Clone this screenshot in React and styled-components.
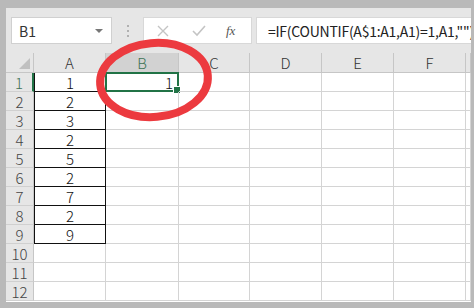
import React from 'react';
import styled, { createGlobalStyle } from 'styled-components';

const GlobalStyle = createGlobalStyle`
  html, body {
    margin: 0;
    padding: 0;
    background: #b9b9b9;
    width: 474px;
    height: 308px;
    overflow: hidden;
  }
  * { box-sizing: border-box; }
`;

const green = '#217346';
const gridLine = '#d4d4d4';

const columns = ['A', 'B', 'C', 'D', 'E', 'F', ''];
const colValues = [1, 2, 3, 2, 5, 2, 7, 2, 9];

const Window = styled.div`
  margin: 8px 3px 0 6px;
  height: 294px;
  background: #e6e6e6;
  display: flex;
  flex-direction: column;
  font-family: 'Noto Sans CJK SC', 'Noto Sans', sans-serif;
  position: relative;
  overflow: hidden;
`;

const Toolbar = styled.div`
  height: 45px;
  display: flex;
  align-items: flex-start;
  padding: 9px 0 0 5px;
`;

const NameBox = styled.div`
  width: 101px;
  height: 27px;
  background: #fff;
  border: 1px solid #d0d0d0;
  display: flex;
  align-items: center;
  justify-content: space-between;
  padding: 0 8px 0 7px;
  font-size: 14px;
  color: #333;
`;

const Caret = styled.span`
  width: 0;
  height: 0;
  border-left: 4px solid transparent;
  border-right: 4px solid transparent;
  border-top: 4px solid #777;
`;

const Grip = styled.div`
  width: 31px;
  height: 27px;
  display: flex;
  flex-direction: column;
  align-items: center;
  justify-content: center;
  gap: 3px;
  span {
    width: 2px;
    height: 2px;
    background: #b0b0b0;
  }
`;

const FxBox = styled.div`
  width: 109px;
  height: 27px;
  background: #fff;
  border: 1px solid #d8d8d8;
  display: flex;
  align-items: center;
  padding-left: 12px;
  gap: 21px;
`;

const Fx = styled.span`
  font-family: 'Liberation Serif', serif;
  font-style: italic;
  font-size: 13px;
  color: #555;
  margin-left: -2px;
`;

const FormulaInput = styled.div`
  margin-left: 4px;
  flex: 1;
  min-width: 0;
  height: 27px;
  background: #fff;
  border: 1px solid #d8d8d8;
  border-right: none;
  display: flex;
  align-items: center;
  padding-left: 11px;
  font-size: 14px;
  letter-spacing: -0.25px;
  color: #222;
  white-space: nowrap;
  overflow: hidden;
`;

const Sheet = styled.div`
  flex: 1;
  display: grid;
  grid-template-columns: 28px 72px 73px 71px 72px 72px 72px 1fr;
  grid-template-rows: 20px repeat(12, 19px);
  background: #fff;
  position: relative;
`;

const Corner = styled.div`
  background: #e6e6e6;
  border-right: 1px solid #c6c6c6;
  border-bottom: 1px solid #c6c6c6;
  position: relative;
  &::after {
    content: '';
    position: absolute;
    right: 3px;
    bottom: 3px;
    width: 0;
    height: 0;
    border-left: 11px solid transparent;
    border-bottom: 11px solid #c0c0c0;
  }
`;

const ColHead = styled.div`
  background: ${(p) => (p.$active ? '#d2d2d2' : '#e6e6e6')};
  color: ${(p) => (p.$active ? '#3d7255' : '#333')};
  border-right: 1px solid #c6c6c6;
  border-bottom: 1px solid ${(p) => (p.$active ? green : '#c6c6c6')};
  display: flex;
  align-items: center;
  justify-content: center;
  font-size: 15px;
  font-weight: 300;
`;

const RowHead = styled.div`
  background: #e6e6e6;
  color: ${(p) => (p.$active ? '#3d7255' : '#444')};
  border-right: ${(p) => (p.$active ? `2px solid ${green}` : '1px solid #c6c6c6')};
  border-bottom: 1px solid #d0d0d0;
  display: flex;
  align-items: center;
  justify-content: center;
  font-size: 15px;
  font-weight: 300;
  line-height: 1;
`;

const Cell = styled.div`
  border-right: 1px solid ${(p) => (p.$boxed ? '#111' : gridLine)};
  border-bottom: 1px solid ${(p) => (p.$boxed ? '#111' : gridLine)};
  border-left: ${(p) => (p.$boxed ? '1px solid #111' : 'none')};
  display: flex;
  align-items: center;
  justify-content: ${(p) => (p.$right ? 'flex-end' : 'center')};
  padding-right: ${(p) => (p.$right ? '4px' : '0')};
  font-size: 15px;
  font-weight: 300;
  color: #111;
  line-height: 1;
  position: relative;
`;

const Selected = styled(Cell)`
  border: 2px solid ${green};
  margin: -1px 0 0 -1px;
  &::after {
    content: '';
    position: absolute;
    right: -4px;
    bottom: -4px;
    width: 6px;
    height: 6px;
    background: ${green};
    border: 1px solid #fff;
  }
`;

const Circle = styled.svg`
  position: absolute;
  left: 86px;
  top: 20px;
  pointer-events: none;
`;

function FormulaBar() {
  return (
    <Toolbar>
      <NameBox>
        B1
        <Caret />
      </NameBox>
      <Grip>
        <span />
        <span />
        <span />
      </Grip>
      <FxBox>
        <svg width="14" height="14" viewBox="0 0 14 14">
          <path d="M2 2 L12 12 M12 2 L2 12" stroke="#c4c4c4" strokeWidth="1.4" fill="none" />
        </svg>
        <svg width="16" height="14" viewBox="0 0 16 14">
          <path d="M2 7 L6 11 L14 2" stroke="#c4c4c4" strokeWidth="1.6" fill="none" />
        </svg>
        <Fx>fx</Fx>
      </FxBox>
      <FormulaInput>=IF(COUNTIF(A$1:A1,A1)=1,A1,"")</FormulaInput>
    </Toolbar>
  );
}

export default function App() {
  const rows = Array.from({ length: 12 }, (_, i) => i + 1);
  return (
    <>
      <GlobalStyle />
      <Window>
        <FormulaBar />
        <Sheet>
          <Corner />
          {columns.map((c, i) => (
            <ColHead key={i} $active={c === 'B'}>
              {c}
            </ColHead>
          ))}
          {rows.map((r) => (
            <React.Fragment key={r}>
              <RowHead $active={r === 1}>{r}</RowHead>
              <Cell $boxed={r <= 9}>{r <= 9 ? colValues[r - 1] : ''}</Cell>
              {r === 1 ? <Selected $right>1</Selected> : <Cell />}
              <Cell />
              <Cell />
              <Cell />
              <Cell />
              <Cell />
            </React.Fragment>
          ))}
        </Sheet>
        <Circle width="140" height="110" viewBox="0 0 140 110">
          <ellipse
            cx="62"
            cy="52"
            rx="54"
            ry="37"
            fill="none"
            stroke="#ec3a3f"
            strokeWidth="8"
            transform="rotate(-5 62 52)"
          />
        </Circle>
      </Window>
    </>
  );
}
